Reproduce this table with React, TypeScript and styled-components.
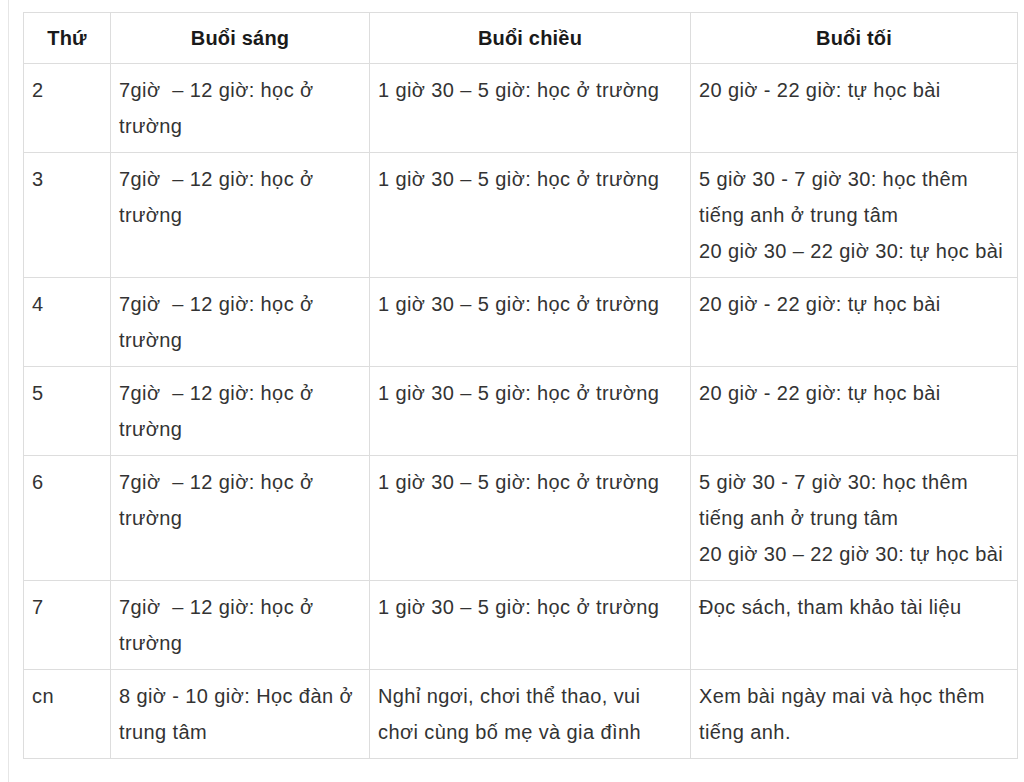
import styled, { createGlobalStyle } from 'styled-components';

const GlobalStyle = createGlobalStyle`
  html, body {
    margin: 0;
    padding: 0;
    background: #ffffff;
  }
`;

const Page = styled.div`
  box-sizing: border-box;
  min-height: 100vh;
  margin-left: 8px;
  padding: 12px 0 0 14px;
  border-left: 1px solid #e6e6e6;
  font-family: 'Liberation Sans', Arial, sans-serif;
`;

const Table = styled.table`
  width: 994px;
  table-layout: fixed;
  border-collapse: collapse;
  font-size: 20px;
  letter-spacing: 0.4px;
  line-height: 36px;
  color: #333333;
`;

const HeadCell = styled.th`
  padding: 7px 8px;
  border: 1px solid #dddddd;
  font-weight: bold;
  text-align: center;
  color: #1a1a1a;
  letter-spacing: 0.2px;
`;

const Cell = styled.td`
  padding: 8px;
  border: 1px solid #dddddd;
  vertical-align: top;
  text-align: left;
`;

const Line = styled.div``;

type Row = { day: string; morning: string; afternoon: string; evening: string[] };

const MORNING = '7giờ\u00a0 – 12 giờ: học ở trường';
const AFTERNOON = '1 giờ 30 – 5 giờ: học ở trường';
const SELF = '20 giờ - 22 giờ: tự học bài';
const EXTRA = ['5 giờ 30 - 7 giờ 30: học thêm tiếng anh ở trung tâm', '20 giờ 30 – 22 giờ 30: tự học bài'];

const rows: Row[] = [
  { day: '2', morning: MORNING, afternoon: AFTERNOON, evening: [SELF] },
  { day: '3', morning: MORNING, afternoon: AFTERNOON, evening: EXTRA },
  { day: '4', morning: MORNING, afternoon: AFTERNOON, evening: [SELF] },
  { day: '5', morning: MORNING, afternoon: AFTERNOON, evening: [SELF] },
  { day: '6', morning: MORNING, afternoon: AFTERNOON, evening: EXTRA },
  { day: '7', morning: MORNING, afternoon: AFTERNOON, evening: ['Đọc sách, tham khảo tài liệu'] },
  {
    day: 'cn',
    morning: '8 giờ - 10 giờ: Học đàn ở trung tâm',
    afternoon: 'Nghỉ ngơi, chơi thể thao, vui chơi cùng bố mẹ và gia đình',
    evening: ['Xem bài ngày mai và học thêm tiếng anh.'],
  },
];

const App = () => {
  return (
    <>
      <GlobalStyle />
      <Page>
        <Table>
          <colgroup>
            <col style={{ width: 87 }} />
            <col style={{ width: 259 }} />
            <col style={{ width: 321 }} />
            <col style={{ width: 327 }} />
          </colgroup>
          <thead>
            <tr>
              <HeadCell>Thứ</HeadCell>
              <HeadCell>Buổi sáng</HeadCell>
              <HeadCell>Buổi chiều</HeadCell>
              <HeadCell>Buổi tối</HeadCell>
            </tr>
          </thead>
          <tbody>
            {rows.map((r) => (
              <tr key={r.day}>
                <Cell>{r.day}</Cell>
                <Cell>{r.morning}</Cell>
                <Cell>{r.afternoon}</Cell>
                <Cell>
                  {r.evening.map((t) => (
                    <Line key={t}>{t}</Line>
                  ))}
                </Cell>
              </tr>
            ))}
          </tbody>
        </Table>
      </Page>
    </>
  );
};

export default App;
